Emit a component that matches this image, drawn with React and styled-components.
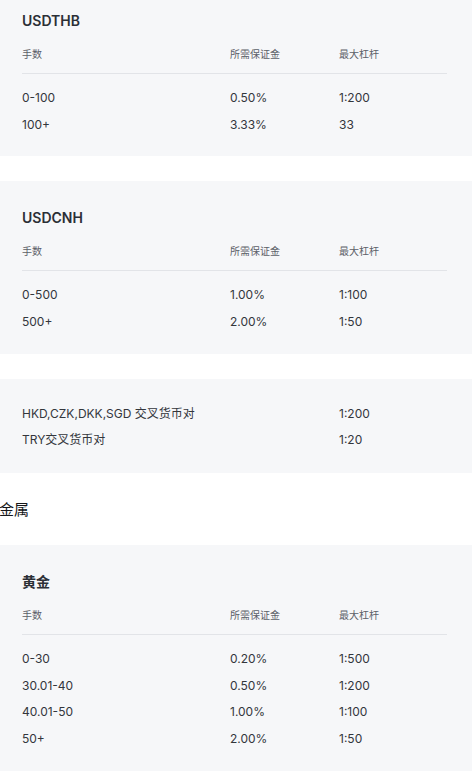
import React from "react";
import styled, { createGlobalStyle } from "styled-components";

const Global = createGlobalStyle`
  html, body { margin: 0; padding: 0; background: #ffffff; overflow: hidden; }
  body { font-family: "Inter", "Noto Sans CJK SC", sans-serif; -webkit-font-smoothing: antialiased; }
`;

const Page = styled.div`
  width: 472px;
  margin-top: -16px;
  display: flex;
  flex-direction: column;
`;

const Card = styled.section`
  background: #f6f7f9;
  padding: ${(p) => (p.$compact ? "22px 25px 19px 22px" : "27px 25px 18px 22px")};
  margin-bottom: 25px;
`;

const Title = styled.h3`
  margin: 0;
  font-size: 14px;
  line-height: 20px;
  font-weight: 600;
  color: #2b2f36;
`;

const HeadRow = styled.div`
  display: grid;
  grid-template-columns: 208px 109px 1fr;
  margin-top: 15px;
  padding-bottom: 11px;
  border-bottom: 1px solid #e2e4e8;
  margin-bottom: 11px;
  font-size: 10px;
  line-height: 16px;
  color: #5c6068;
`;

const Row = styled.div`
  display: grid;
  grid-template-columns: ${(p) => (p.$two ? "317px 1fr" : "208px 109px 1fr")};
  font-size: 12px;
  line-height: 26.67px;
  color: #33363c;
`;

const SectionHeading = styled.h2`
  margin: 0 0 23px -1px;
  font-size: 15px;
  line-height: 24px;
  font-weight: 400;
  color: #15171a;
`;

const tables = [
  {
    title: "USDTHB",
    rows: [
      ["0-100", "0.50%", "1:200"],
      ["100+", "3.33%", "33"],
    ],
  },
  {
    title: "USDCNH",
    rows: [
      ["0-500", "1.00%", "1:100"],
      ["500+", "2.00%", "1:50"],
    ],
  },
];

const gold = {
  title: "黄金",
  rows: [
    ["0-30", "0.20%", "1:500"],
    ["30.01-40", "0.50%", "1:200"],
    ["40.01-50", "1.00%", "1:100"],
    ["50+", "2.00%", "1:50"],
  ],
};

function TableCard({ data }) {
  return (
    <Card>
      <Title>{data.title}</Title>
      <HeadRow>
        <span>手数</span>
        <span>所需保证金</span>
        <span>最大杠杆</span>
      </HeadRow>
      {data.rows.map((r, i) => (
        <Row key={i}>
          {r.map((c, j) => (
            <span key={j}>{c}</span>
          ))}
        </Row>
      ))}
    </Card>
  );
}

export default function App() {
  return (
    <>
      <Global />
      <Page>
        {tables.map((t) => (
          <TableCard key={t.title} data={t} />
        ))}
        <Card $compact>
          <Row $two>
            <span>HKD,CZK,DKK,SGD 交叉货币对</span>
            <span>1:200</span>
          </Row>
          <Row $two>
            <span>TRY交叉货币对</span>
            <span>1:20</span>
          </Row>
        </Card>
        <SectionHeading>金属</SectionHeading>
        <TableCard data={gold} />
      </Page>
    </>
  );
}
